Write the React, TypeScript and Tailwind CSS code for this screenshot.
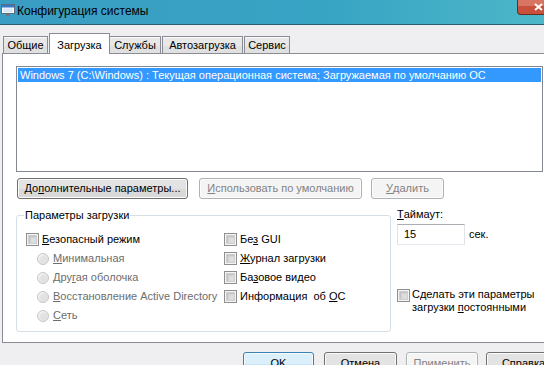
import React from "react"

function CheckBox() {
   return (
      <span className="w-[13px] h-[13px] shrink-0 border border-[#8e8f8f] bg-[#f4f4f4] p-[1px] flex">
         <span className="flex-1 border border-[#cfcfcf] bg-[#dedede] shadow-[inset_1px_1px_2px_#bcbcbc]" />
      </span>
   )
}

function Radio() {
   return (
      <span className="w-[12px] h-[12px] shrink-0 rounded-full border border-[#c8c8c8] bg-[#e2e2e2] shadow-[inset_1px_1px_2px_#f8f8f8]" />
   )
}

type BtnProps = { w: string; children: React.ReactNode; disabled?: boolean; focused?: boolean; h?: string }

function Button({ w, children, disabled, focused, h = 'h-[21px]' }: BtnProps) {
   let cls = 'border-[#707070] text-black bg-[#e3e3e3] shadow-[inset_0_0_0_1px_#fbfbfb,inset_0_-9px_0_0_#d9d9d9]'
   if (disabled) cls = 'border-[#adb2b5] text-[#838383] bg-[#f4f4f4] shadow-[inset_0_0_0_1px_#fcfcfc]'
   if (focused) cls = 'border-[#3c7fb1] text-black bg-[#dcf0fb] shadow-[inset_0_0_0_1px_#f4fbff,inset_0_-10px_0_0_#c4e5f7]'
   return (
      <div className={`${w} ${h} ${cls} shrink-0 border rounded-[3px] flex items-center justify-center leading-none`}>
         {children}
      </div>
   )
}

function Row({ children, radio }: { children: React.ReactNode; radio?: boolean }) {
   return (
      <div className={`h-[19px] flex items-center ${radio ? 'pl-[11px] gap-[4px] text-[#6d6d6d]' : 'gap-[3px]'}`}>
         {radio ? <Radio /> : <CheckBox />}
         <span>{children}</span>
      </div>
   )
}

const tab = 'h-[17px] border border-b-0 border-[#898c95] bg-[#e8e8e8] shadow-[inset_0_1px_0_0_#fafafa,inset_0_-7px_0_0_#e0e0e0] flex items-center justify-center'

export default function App() {
   return (
      <main className="w-[544px] h-[365px] overflow-hidden bg-[#efeef0] text-[11px] text-black font-['Liberation_Sans',Arial,sans-serif]">
         {/* title bar */}
         <div className="h-[25px] bg-[#3ba3c4] bg-[linear-gradient(90deg,#3a9dc3,#38a4c4_60%,#4cb7c8)] border-b border-[#2b5e70] flex items-start">
            <svg width="14" height="12" viewBox="0 0 14 12" className="mt-[4px] ml-[1px]">
               <rect x="0.5" y="0.5" width="13" height="9" fill="#f4f8fc" stroke="#5a6c80" />
               <rect x="1" y="1" width="12" height="2.5" fill="#3a78c8" />
               <rect x="2.5" y="4.5" width="9" height="4" fill="#d8e8f6" />
               <rect x="5" y="10" width="4" height="2" fill="#6c7a88" />
            </svg>
            <span className="ml-[2px] mt-[5px] text-[12px] leading-none">Конфигурация системы</span>
            <div className="ml-auto w-[27px] h-[15px] bg-[#c8503c] rounded-bl-[4px] border-l border-b border-[#6b2a22] shadow-[inset_0_6px_0_0_#d87462] flex items-center justify-end pr-[1px]">
               <svg width="9" height="8" viewBox="0 0 9 8">
                  <path d="M1 1 L8 7 M8 1 L1 7" stroke="#ffffff" strokeWidth="2" />
               </svg>
            </div>
         </div>

         {/* tabs */}
         <nav className="h-[28px] flex items-end pl-[3px]">
            <div className={`${tab} w-[45px]`}>Общие</div>
            <div className="relative z-10 -mb-px ml-[1px] w-[61px] h-[21px] border border-b-0 border-[#898c95] bg-white flex items-start pt-[3px] justify-center">Загрузка</div>
            <div className={`${tab} w-[51px] border-l-0`}>Службы</div>
            <div className={`${tab} w-[81px] ml-[1px]`}>Автозагрузка</div>
            <div className={`${tab} w-[46px] ml-[1px]`}>Сервис</div>
         </nav>

         {/* tab page */}
         <section className="ml-[2px] w-[600px] h-[290px] border border-[#898c95] bg-white pl-[13px] pt-[12px]">
            <div className="w-[527px] h-[106px] border border-[#828790] p-[1px]">
               <div className="h-[14px] bg-[#3399ff] text-white pl-[2px] flex items-center leading-none">
                  Windows 7 (C:\Windows) : Текущая операционная система; Загружаемая по умолчанию ОС
               </div>
            </div>

            <div className="mt-[6px] flex">
               <Button w="w-[171px] ml-[1px]">До<u>п</u>олнительные параметры...</Button>
               <Button w="w-[163px] ml-[11px]" disabled><u>И</u>спользовать по умолчанию</Button>
               <Button w="w-[73px] ml-[9px]" disabled><u>У</u>далить</Button>
            </div>

            <div className="flex">
               <div className="mt-[16px] w-[375px] h-[117px] border border-[#d5dfe5] rounded-[3px] pl-[9px]">
                  <div className="-mt-[8px] -ml-[2px] h-[15px] w-fit px-[1px] bg-white flex items-center">Параметры загрузки</div>
                  <div className="mt-[7px] grid grid-cols-[198px_1fr]">
                     <div>
                        <Row><u>Б</u>езопасный режим</Row>
                        <Row radio><u>М</u>инимальная</Row>
                        <Row radio>Дру<u>г</u>ая оболочка</Row>
                        <Row radio><u>В</u>осстановление Active Directory</Row>
                        <Row radio><u>С</u>еть</Row>
                     </div>
                     <div>
                        <Row>Бе<u>з</u> GUI</Row>
                        <Row><u>Ж</u>урнал загрузки</Row>
                        <Row>Ба<u>з</u>овое видео</Row>
                        <Row>Информация&nbsp; об <u>О</u>С</Row>
                     </div>
                  </div>
               </div>

               <div className="ml-[6px] mt-[8px]">
                  <div className="h-[14px] flex items-center"><u>Т</u>аймаут:</div>
                  <div className="mt-[3px] flex items-center">
                     <div className="w-[68px] h-[21px] border border-[#abadb3] border-b-[#e3e9ef] border-x-[#e2e3ea] bg-white pl-[6px] flex items-center">15</div>
                     <span className="ml-[4px]">сек.</span>
                  </div>
                  <div className="mt-[44px] flex items-start gap-[2px]">
                     <CheckBox />
                     <div className="leading-[13px] -mt-[1px]">Сделать эти параметры<br />загрузки <u>п</u>остоянными</div>
                  </div>
               </div>
            </div>
         </section>

         {/* dialog buttons */}
         <footer className="mt-[9px] flex pl-[243px] gap-[10px]">
            <Button w="w-[71px]" h="h-[23px]" focused>OK</Button>
            <Button w="w-[73px]" h="h-[23px]">Отмена</Button>
            <Button w="w-[72px] -ml-[1px]" h="h-[23px]" disabled>Применить</Button>
            <Button w="w-[75px] -ml-[2px]" h="h-[23px]">Справка</Button>
         </footer>
      </main>
   )
}
